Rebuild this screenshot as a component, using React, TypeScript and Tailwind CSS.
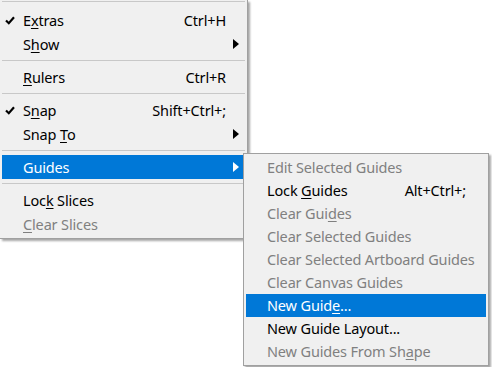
import React from "react";

type Item =
  | { sep: true }
  | {
      sep?: false;
      label: React.ReactNode;
      shortcut?: string;
      check?: boolean;
      arrow?: boolean;
      disabled?: boolean;
      active?: boolean;
    };

const U = ({ children }: { children: React.ReactNode }) => (
  <span className="underline underline-offset-[2px] decoration-[1px]">{children}</span>
);

const Check = () => (
  <svg width="10" height="9" viewBox="0 0 10 9" className="absolute left-[3px] top-[8px]">
    <path d="M1 4.5 L3.8 7.2 L9 1.2" fill="none" stroke="#000" strokeWidth="2.2" />
  </svg>
);

const Arrow = ({ white }: { white?: boolean }) => (
  <svg width="6" height="10" viewBox="0 0 6 10" className="absolute right-[6px] top-[7px]">
    <polygon points="0,0 6,5 0,10" fill={white ? "#fff" : "#000"} />
  </svg>
);

function Row({ item, h, pl, pr }: { item: Exclude<Item, { sep: true }>; h: string; pl: string; pr: string }) {
  const color = item.active ? "text-white bg-[#0078d7]" : item.disabled ? "text-[#808080]" : "text-[#000]";
  return (
    <div className={`relative flex items-center justify-between ${h} ${pl} ${pr} ${color}`}>
      {item.check && <Check />}
      <span className="whitespace-nowrap">{item.label}</span>
      {item.shortcut && <span className="whitespace-nowrap">{item.shortcut}</span>}
      {item.arrow && <Arrow white={item.active} />}
    </div>
  );
}

const Sep = () => (
  <div className="h-[9px] pt-[4px]">
    <div className="h-px bg-[#c8c8c8]" />
  </div>
);

const mainItems: Item[] = [
  { label: <>E<U>x</U>tras</>, shortcut: "Ctrl+H", check: true },
  { label: <>S<U>h</U>ow</>, arrow: true },
  { sep: true },
  { label: <><U>R</U>ulers</>, shortcut: "Ctrl+R" },
  { sep: true },
  { label: <>S<U>n</U>ap</>, shortcut: "Shift+Ctrl+;", check: true },
  { label: <>Snap <U>T</U>o</>, arrow: true },
  { sep: true },
  { label: "Guides", arrow: true, active: true },
  { sep: true },
  { label: <>Loc<U>k</U> Slices</> },
  { label: <><U>C</U>lear Slices</>, disabled: true },
];

const subItems: Item[] = [
  { label: "Edit Selected Guides", disabled: true },
  { label: <>Lock <U>G</U>uides</>, shortcut: "Alt+Ctrl+;" },
  { label: <>Clear Gui<U>d</U>es</>, disabled: true },
  { label: "Clear Selected Guides", disabled: true },
  { label: "Clear Selected Artboard Guides", disabled: true },
  { label: "Clear Canvas Guides", disabled: true },
  { label: <>New Guid<U>e</U>...</>, active: true },
  { label: "New Guide Layout..." },
  { label: <>New Guides From Sh<U>a</U>pe</>, disabled: true },
];

export default function App() {
  return (
    <div
      className="relative w-[492px] h-[367px] bg-white overflow-hidden text-[14.5px] tracking-[-0.15px] leading-none"
      style={{ fontFamily: '"Noto Sans", "Open Sans", sans-serif' }}
    >
      <div className="w-[248px] bg-[#f0f0f0] border-r border-b border-[#a0a0a0] pl-[2px] pr-[2px] pb-[2px] shadow-[2px_2px_2px_rgba(0,0,0,0.35)]">
        <div className="h-[8px] pt-[1px]">
          <div className="h-px bg-[#c8c8c8]" />
        </div>
        {mainItems.map((it, i) =>
          it.sep ? <Sep key={i} /> : <Row key={i} item={it} h="h-[24px]" pl="pl-[21px]" pr="pr-[19px]" />
        )}
      </div>
      <div className="absolute left-[243px] top-[153px] w-[246px] bg-[#f0f0f0] border border-[#a0a0a0] p-[2px] shadow-[2px_2px_2px_rgba(0,0,0,0.35)]">
        {subItems.map((it, i) =>
          it.sep ? <Sep key={i} /> : <Row key={i} item={it} h="h-[23px]" pl="pl-[21px]" pr="pr-[20px]" />
        )}
      </div>
    </div>
  );
}
